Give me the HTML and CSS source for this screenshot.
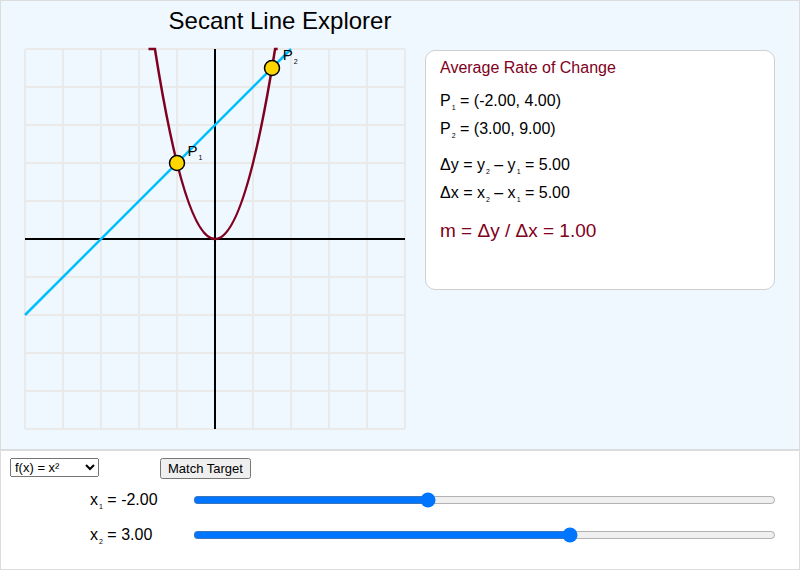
FILE: index.html
```html
<!DOCTYPE html>
<html lang="en">
<head>
<meta charset="utf-8">
<title>Secant Line Explorer</title>
<link rel="stylesheet" href="styles.css">
</head>
<body>
<div class="app">
  <div class="stage">
    <svg class="plot" width="424" height="448" viewBox="0 0 424 448">
      <text class="title" x="279" y="27.5" text-anchor="middle">Secant Line Explorer</text>
      <g transform="translate(24,48)">
        <path class="grid" d="M0 0V380M38 0V380M76 0V380M114 0V380M152 0V380M190 0V380M228 0V380M266 0V380M304 0V380M342 0V380M380 0V380M0 0H380M0 38H380M0 76H380M0 114H380M0 152H380M0 190H380M0 228H380M0 266H380M0 304H380M0 342H380M0 380H380"/>
        <path class="axis" d="M0 190H380M190 0V380"/>
        <path class="curve" d="M123.5 0L129.92 0Q190 380 250.08 0L252.7 0"/>
        <line class="secant" x1="0" y1="266" x2="266" y2="0"/>
        <circle class="pt" cx="152" cy="114" r="7.5"/>
        <circle class="pt" cx="247" cy="19" r="7.5"/>
        <text class="plabel" x="162.5" y="106.5">P<tspan class="psub" dx="1" dy="4">1</tspan></text>
        <text class="plabel" x="257.7" y="11">P<tspan class="psub" dx="1" dy="4">2</tspan></text>
      </g>
    </svg>
    <div class="info">
      <div class="info-title">Average Rate of Change</div>
      <div class="group">
        <div class="line">P<span class="sub">1</span> = (-2.00, 4.00)</div>
        <div class="line">P<span class="sub">2</span> = (3.00, 9.00)</div>
      </div>
      <div class="group deltas">
        <div class="line">Δy = y<span class="sub">2</span> – y<span class="sub">1</span> = 5.00</div>
        <div class="line">Δx = x<span class="sub">2</span> – x<span class="sub">1</span> = 5.00</div>
      </div>
      <div class="slope">m = Δy / Δx = 1.00</div>
    </div>
  </div>
  <div class="controls">
    <div class="toolbar">
      <select class="fn">
        <option selected>f(x) = x²</option>
        <option>f(x) = x³</option>
        <option>f(x) = sin(x)</option>
        <option>f(x) = 2x + 1</option>
      </select>
      <button class="btn" type="button">Match Target</button>
    </div>
    <div class="slider-row">
      <label class="slabel">x<span class="sub">1</span> = -2.00</label>
      <input class="slider" type="range" min="-10" max="10" step="0.1" value="-2">
    </div>
    <div class="slider-row">
      <label class="slabel">x<span class="sub">2</span> = 3.00</label>
      <input class="slider" type="range" min="-10" max="10" step="0.1" value="3">
    </div>
  </div>
</div>
</body>
</html>
```

FILE: styles.css
```css
body {
  margin: 0;
  background: #ffffff;
  font-family: "Liberation Sans", Arial, Helvetica, sans-serif;
  color: #000;
}

.app {
  width: 800px;
}

.stage {
  height: 450px;
  box-sizing: border-box;
  border: 1px solid #dcdcdc;
  background: #f0f8ff;
  display: flex;
  align-items: flex-start;
}

.plot {
  display: block;
  flex: none;
}

.title {
  font-family: "Liberation Sans", Arial, sans-serif;
  font-size: 24px;
  fill: #000;
}

.grid {
  fill: none;
  stroke: #eaeaea;
  stroke-width: 2;
}

.axis {
  fill: none;
  stroke: #000;
  stroke-width: 2;
}

.curve {
  fill: none;
  stroke: #800020;
  stroke-width: 2.5;
}

.secant {
  stroke: #00bfff;
  stroke-width: 2.5;
}

.pt {
  fill: #ffd700;
  stroke: #000;
  stroke-width: 1.5;
}

.plabel {
  font-family: "Liberation Sans", Arial, sans-serif;
  font-size: 15px;
  fill: #000;
}

.psub {
  font-size: 7px;
}

.info {
  flex: none;
  width: 350px;
  height: 240px;
  box-sizing: border-box;
  margin-top: 49px;
  border: 1px solid #cfcfcf;
  border-radius: 10px;
  background: #fff;
  padding: 7px 14px 0;
}

.info-title {
  font-size: 16px;
  line-height: 20px;
  color: #800020;
}

.group {
  margin-top: 9px;
}

.group.deltas {
  margin-top: 8px;
}

.line {
  font-size: 16px;
  line-height: 28px;
  white-space: nowrap;
}

.sub {
  font-size: 7px;
  line-height: 0;
  vertical-align: -4px;
  margin-left: 1px;
}

.slope {
  margin-top: 12px;
  font-size: 19px;
  line-height: 24px;
  color: #800020;
}

.controls {
  height: 120px;
  box-sizing: border-box;
  border: 1px solid #dcdcdc;
  background: #fff;
  padding: 7px 9px 0;
}

.toolbar {
  display: flex;
  align-items: flex-start;
  gap: 61px;
  height: 21px;
}

.fn {
  width: 89px;
  height: 19px;
  margin: 0;
  font-family: "Liberation Sans", Arial, sans-serif;
  font-size: 13px;
}

.btn {
  margin: 0;
  height: 21px;
  font-family: "Liberation Sans", Arial, sans-serif;
  font-size: 13px;
}

.slider-row {
  display: flex;
  align-items: center;
  height: 35px;
  padding-left: 80px;
}

.toolbar + .slider-row {
  margin-top: 3px;
}

.slabel {
  width: 103px;
  flex: none;
  font-size: 16px;
  white-space: nowrap;
}

.slider {
  width: 583px;
  margin: 0;
  flex: none;
}
```
